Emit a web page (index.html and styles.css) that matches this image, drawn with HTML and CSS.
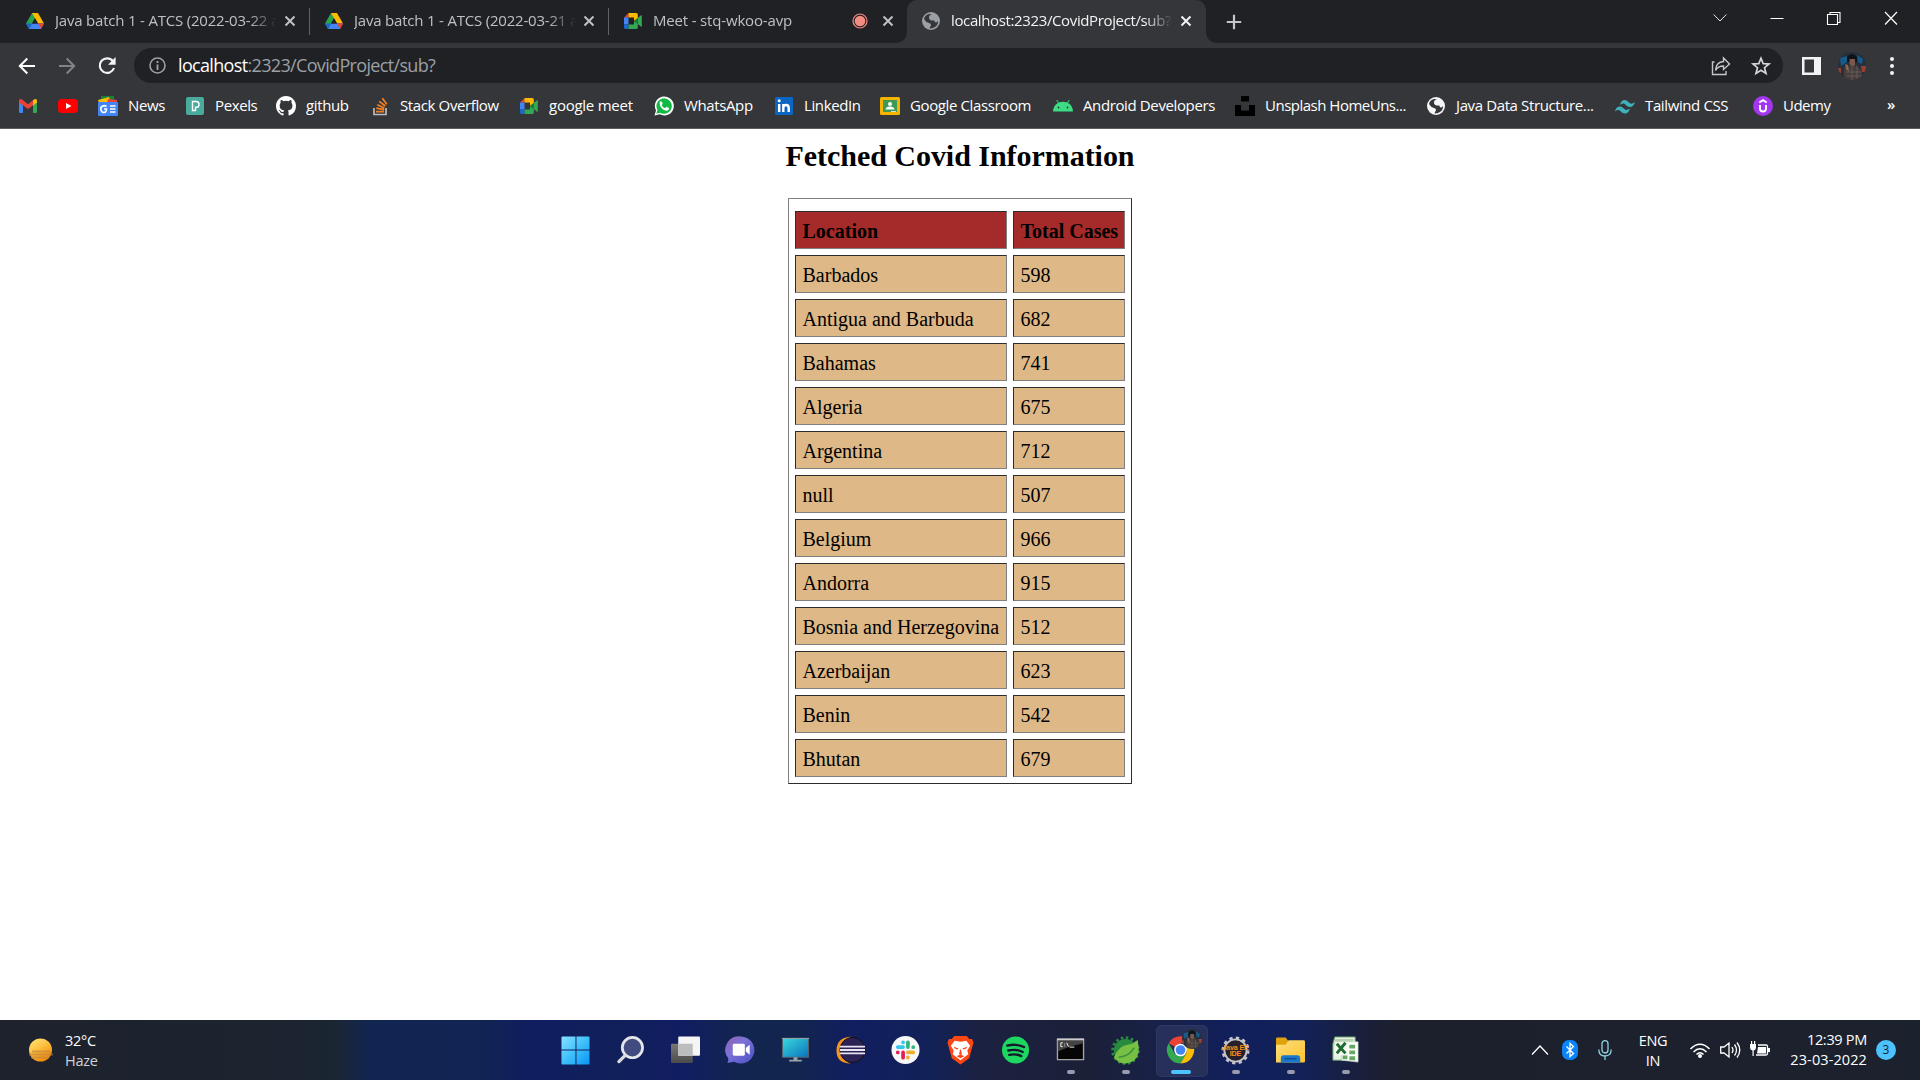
FILE: index.html
```html
<!DOCTYPE html>
<html lang="en">
<head>
<meta charset="utf-8">
<title>Covid Information</title>
<link rel="stylesheet" href="styles.css">
</head>
<body>
<svg class="defs" width="0" height="0">
  <defs>
    <linearGradient id="sun" x1="0" y1="0" x2=".6" y2="1"><stop offset="0" stop-color="#ffe97a"/><stop offset=".5" stop-color="#fcc040"/><stop offset="1" stop-color="#f58b0a"/></linearGradient>
    <linearGradient id="win" x1="0" y1="0" x2="1" y2="1"><stop offset="0" stop-color="#8ae2ff"/><stop offset=".5" stop-color="#3fc0fb"/><stop offset="1" stop-color="#0a94f5"/></linearGradient>
    <linearGradient id="chat" x1="0" y1="0" x2="1" y2="1"><stop offset="0" stop-color="#9a62b0"/><stop offset=".4" stop-color="#7a72d8"/><stop offset="1" stop-color="#4b4fc4"/></linearGradient>
    <linearGradient id="mon" x1="0" y1="0" x2="1" y2="1"><stop offset="0" stop-color="#38dbdc"/><stop offset="1" stop-color="#0b70bd"/></linearGradient>
    <linearGradient id="fold" x1="0" y1="0" x2="1" y2="1"><stop offset="0" stop-color="#ffdf7a"/><stop offset="1" stop-color="#fcc230"/></linearGradient>
    <linearGradient id="tv" x1="0" y1="0" x2="0" y2="1"><stop offset="0" stop-color="#777"/><stop offset="1" stop-color="#4b4b4b"/></linearGradient>
  </defs>
  <symbol id="drive" viewBox="0 0 18 18"><path fill="#2ba24c" d="M6 1h6L3 17 0 11.5z"/><path fill="#ffba00" d="M6 1h6l6 10.5h-6z"/><path fill="#4285f4" d="M3 17l3-5.5h12L15 17z"/><path fill="#1967d2" d="M0 11.5h6L3 17z"/><path fill="#ea4335" d="M12 11.5h6L15 17z"/><path fill="#202124" d="M9 6.3l3 5.2H6z"/></symbol>
  <symbol id="meet" viewBox="0 0 18 18"><path fill="#ea4335" d="M0 5.500L4.500 1v4.500z"/><path fill="#ffba00" d="M4.500 1h7.700q1.600 0 1.600 1.600V6L10 9V5.500H4.500z"/><path fill="#4285f4" d="M0 5.500h4.500v7H0z"/><path fill="#1967d2" d="M0 12.500h4.500V17H1.600Q0 17 0 15.400z"/><path fill="#34a853" d="M4.500 12.500H10V9l3.800 3v3.400q0 1.600-1.600 1.600H4.500z"/><path fill="#188038" d="M10 9l3.800-3v6z"/><path fill="#34a853" d="M13.800 6L17 3.300q.8-.4.8.5v10.400q0 .9-.8.5L13.800 12z"/></symbol>
  <symbol id="x" viewBox="0 0 12 12"><path d="M1.500 1.500l9 9m0-9l-9 9" fill="none" stroke="currentColor" stroke-width="2"/></symbol>
  <symbol id="globe" viewBox="0 0 18 18"><circle cx="9" cy="9" r="9" fill="currentColor"/><path class="land" d="M10.200 2Q7 3 7 5.500t3 3h2.300q.7 3 2.700 1.500l1-1q.5 5-5 7-2.200.7-3.500.3l1.500-3q.3-2-2-2.300Q4 10.500 2 7q1-4.300 5.500-5z"/></symbol>
  <symbol id="gear" viewBox="0 0 30 30"><circle cx="15" cy="15" r="12" fill="currentColor"/><circle cx="15" cy="15" r="13.300" fill="none" stroke="currentColor" stroke-width="3" stroke-dasharray="2.610 2.610"/></symbol>
  <symbol id="cog" viewBox="0 0 30 30"><circle cx="15" cy="15" r="11.500" fill="none" stroke="currentColor" stroke-width="2"/><circle cx="15" cy="15" r="13" fill="none" stroke="currentColor" stroke-width="3" stroke-dasharray="3.403 3.403"/></symbol>
</svg>

<header class="browser">
  <div class="tabstrip">
    <div class="tab"><svg class="fav"><use href="#drive"/></svg><span class="tab-title t1">Java batch 1 - ATCS (2022-03-22 at</span><svg class="close"><use href="#x"/></svg></div>
    <div class="tab"><svg class="fav"><use href="#drive"/></svg><span class="tab-title t1">Java batch 1 - ATCS (2022-03-21 at</span><svg class="close"><use href="#x"/></svg></div>
    <div class="tab last"><svg class="fav"><use href="#meet"/></svg><span class="tab-title t3">Meet - stq-wkoo-avp</span><svg class="rec" viewBox="0 0 16 16"><circle cx="8" cy="8" r="5.300" fill="#f28b82"/><circle cx="8" cy="8" r="7" fill="none" stroke="#f28b82" stroke-width="1.200"/></svg><svg class="close"><use href="#x"/></svg></div>
    <div class="tab active"><svg class="fav"><use href="#globe"/></svg><span class="tab-title t4">localhost:2323/CovidProject/sub?</span><svg class="close"><use href="#x"/></svg></div>
    <svg class="newtab" viewBox="0 0 16 16"><path d="M8 .8v14.400M.8 8h14.400" stroke="#c4c7ca" stroke-width="2.200"/></svg>
    <div class="controls">
      <svg viewBox="0 0 14 14"><path d="M.7 3.500L7 10l6.300-6.500" fill="none" stroke="#e6e6e6"/></svg>
      <svg viewBox="0 0 14 14"><path d="M.5 7.500h13" stroke="#fff"/></svg>
      <svg viewBox="0 0 14 14"><path d="M.5 3.500h10v10H.5zM3 3.500v-2h10v10h-2.500" fill="none" stroke="#fff" stroke-width="1.100"/></svg>
      <svg viewBox="0 0 14 14"><path d="M1 1l12 12.500M13 1L1 13.500" stroke="#fff" stroke-width="1.200"/></svg>
    </div>
  </div>

  <div class="toolbar">
    <svg class="nav" viewBox="0 0 18 18"><path d="M17 9H2.500M9.300 1.500L1.800 9l7.500 7.500" fill="none" stroke="#fff" stroke-width="2"/></svg>
    <svg class="nav" viewBox="0 0 18 18"><path d="M1 9h14.500M8.700 1.500L16.200 9l-7.500 7.500" fill="none" stroke="#808387" stroke-width="2"/></svg>
    <svg class="nav" viewBox="0 0 18 18"><path d="M14.800 4A7.300 7.300 0 1 0 16 11" fill="none" stroke="#f1f3f4" stroke-width="2.200"/><path d="M17.600 0v7.800H10z" fill="#f1f3f4"/></svg>
    <div class="omnibox">
      <svg class="info" viewBox="0 0 17 17"><circle cx="8.500" cy="8.500" r="7.500" fill="none" stroke="#9aa0a6" stroke-width="1.600"/><path d="M8.500 7.500V13M8.500 4v2" stroke="#9aa0a6" stroke-width="1.900"/></svg>
      <span class="url"><b>localhost</b>:2323/CovidProject/sub?</span>
      <svg class="act" viewBox="0 0 20 20"><path d="M3.500 6H1.500v12.500H15V15" fill="none" stroke="#c4c7ca" stroke-width="1.400"/><path d="M4.500 14.500Q5 6 12.500 5.500V2l6 6-6 5.500V10Q7 10 4.500 14.500z" fill="none" stroke="#c4c7ca" stroke-width="1.400"/></svg>
      <svg class="act" viewBox="0 0 20 20"><path d="M10 2.200l2.200 5.400 5.800.4-4.500 3.700 1.500 5.700-5-3.200-5 3.200 1.500-5.700L2 8l5.800-.4z" fill="none" stroke="#d5d7da" stroke-width="1.700"/></svg>
    </div>
    <svg class="side" viewBox="0 0 19 18"><path d="M0 0h19v18H0zM2.500 2.500v13h9.500v-13z" fill="#f1f3f4" fill-rule="evenodd"/></svg>
    <svg class="avatar" viewBox="0 0 28 28"><clipPath id="ava"><circle cx="14" cy="14" r="14"/></clipPath><g id="photo" clip-path="url(#ava)"><path fill="#25303c" d="M0 0h28v28H0z"/><path fill="#175a8c" d="M2 6l7-2 0 6-6 4zM19 3l6 4-1 5-4-2z"/><path fill="#9a4030" d="M23 14h5v6h-4zM0 16h3v5H0z"/><path fill="#101217" d="M9 5q5-6 10 0v5H9z"/><path fill="#7a584b" d="M11.500 7h5.500v6l-2.500 2-3-3z"/><path fill="#453e3d" d="M6 16l6-3 3 2 4-2 5 7v8H6z"/><path fill="#8c6553" d="M7 12l3 1 1 7-3-3z"/><path stroke="#6d615d" stroke-width=".8" d="M8 20h15M9 24h14M14 15v13M19 15v13"/></g></svg>
    <svg class="dots" viewBox="0 0 4 18"><g fill="#f1f3f4"><circle cx="2" cy="2" r="2"/><circle cx="2" cy="9" r="2"/><circle cx="2" cy="16" r="2"/></g></svg>
  </div>

  <nav class="bookmarks">
    <a><svg viewBox="0 0 20 20"><path fill="#4285f4" d="M1 4h4v13H2.500Q1 17 1 15.500z"/><path fill="#34a853" d="M15 8l4-3v10.500q0 1.500-1.500 1.500H15z"/><path fill="#ea4335" d="M1 5q0-3 3-1.500l6 4.700 6-4.700v5L10 13 1 6.500z"/><path fill="#fbbc04" d="M15 4.200Q19 1.500 19 5v1.500l-4 3z"/></svg></a>
    <a><svg viewBox="0 0 20 20"><rect y="3" width="20" height="14" rx="4" fill="#f00"/><path fill="#fff" d="M8 7l5.500 3L8 13z"/></svg></a>
    <a><svg viewBox="0 0 20 20"><path fill="#188038" d="M3 0h13v6H3z"/><path fill="#fbbc04" d="M0 4l11-3 2 6H1z"/><path fill="#ea4335" d="M10 3l9 1v4H9z"/><rect y="6" width="20" height="14" rx="1" fill="#4285f4"/><path d="M8.500 10.500Q6.500 9 4.300 10.200T3 14q.7 2.500 3 2.500T8.500 13H6M17.500 10H12m5.500 3H12m5.500 3H12" fill="none" stroke="#fff" stroke-width="1.600"/></svg><span>News</span></a>
    <a><svg viewBox="0 0 20 20"><rect x="1" y="1" width="18" height="18" rx="2" fill="#4aaa9b"/><path d="M7.500 14.500v-9h3.700q2.800 0 2.800 2.900t-2.800 2.900H10.500V14.500z" fill="none" stroke="#fff" stroke-width="1.400"/></svg><span>Pexels</span></a>
    <a><svg viewBox="0 0 16 16"><path fill="#fff" d="M8 0C3.580 0 0 3.580 0 8c0 3.540 2.290 6.530 5.470 7.590.4.070.55-.17.55-.38v-1.490c-2.010.37-2.530-.49-2.690-.94-.09-.23-.48-.94-.82-1.130-.28-.15-.68-.52-.01-.53.63-.01 1.080.58 1.230.82.72 1.210 1.870.87 2.330.66.07-.52.280-.87.510-1.070-1.780-.2-3.640-.89-3.640-3.950 0-.87.310-1.590.82-2.150-.08-.2-.36-1.020.08-2.120 0 0 .67-.21 2.200.82a7.600 7.600 0 0 1 4 0c1.530-1.040 2.200-.82 2.200-.82.440 1.100.160 1.920.08 2.120.51.560.82 1.270.82 2.150 0 3.070-1.870 3.750-3.650 3.950.29.25.54.73.54 1.480v2.200c0 .21.15.46.55.38A8 8 0 0 0 16 8c0-4.420-3.580-8-8-8z"/></svg><span>github</span></a>
    <a><svg viewBox="0 0 20 20"><path d="M4 12v6.500h12V12" fill="none" stroke="#bcbbbb" stroke-width="1.700"/><path d="M6 15.600h8M6.300 12.200l7.900 1.500M7.300 8.700l7 3.300M9.300 5.300l6 4.700M12.300 2.300l4.500 6" stroke="#f48024" stroke-width="1.700"/></svg><span>Stack Overflow</span></a>
    <a class="wide"><svg class="pad"><use href="#meet"/></svg><span>google meet</span></a>
    <a><svg viewBox="0 0 20 20"><path d="M.5 19.500L2 14.500A9.500 9.500 0 1 1 5.800 18.300z" fill="#fff"/><path d="M2.300 17.800L3.500 14A7.700 7.700 0 1 1 6.200 16.700z" fill="#12b944"/><path d="M5.500 6.500q1.500-2.500 2.500-.4l.7 1.700-1 1.400q1.300 2.300 3.500 3l1.300-1.400 2.500 1.300q.3 2.500-2.800 2.600-6.200-1.200-6.700-8.200z" fill="#fff"/></svg><span>WhatsApp</span></a>
    <a><svg viewBox="0 0 20 20"><rect x="1" y="1" width="18" height="18" rx="1" fill="#0a66c2"/><path d="M5.200 8v8M9.300 16V8m0 4q0-3 2.700-3t2.700 3v4" fill="none" stroke="#fff" stroke-width="2.400"/><circle cx="5.200" cy="4.800" r="1.500" fill="#fff"/></svg><span>LinkedIn</span></a>
    <a><svg viewBox="0 0 20 20"><rect y="1" width="20" height="18" rx="1.500" fill="#f4b400"/><path fill="#3f9b54" d="M3 4h14v12H3z"/><circle cx="10" cy="8" r="2" fill="#fff"/><path fill="#fff" d="M5.500 13.500q.5-3 4.500-3t4.500 3z"/><path fill="#ddd" d="M11 15h5v1h-5z"/></svg><span>Google Classroom</span></a>
    <a><svg viewBox="0 0 20 20"><path fill="#3ddc84" d="M0 15.500Q.5 9 5 7L3.300 4.200l.7-.4L5.800 6.600Q10 5 14.200 6.600L16 3.800l.7.4L15 7q4.500 2 5 8.500z"/><circle cx="5.500" cy="11.500" r=".9" fill="#35363a"/><circle cx="14.500" cy="11.500" r=".9" fill="#35363a"/></svg><span>Android Developers</span></a>
    <a class="tight"><svg viewBox="0 0 20 20"><path d="M6 0h8v5.500H6zM0 9h6v5.500h8V9h6v11H0z"/></svg><span>Unsplash HomeUns...</span></a>
    <a class="white"><svg class="pad"><use href="#globe"/></svg><span>Java Data Structure...</span></a>
    <a><svg viewBox="0 0 20 20"><path fill="#3fb1bd" d="M5 9q1-5 5-5 2 0 4 2.500t6-.5q-1.500 5-5 5-2.500 0-4.500-2.300T5 9zM0 15.500q1-5 5-5 2 0 4 2.300t6-.3q-1.500 5-5 5-2.500 0-4.500-2.300T0 15.500z"/></svg><span>Tailwind CSS</span></a>
    <a class="tight"><svg viewBox="0 0 20 20"><circle cx="10" cy="10" r="10" fill="#a435f0"/><path d="M6.300 6.500L10 4.200l3.700 2.300M7 9v3.500q0 3 3 3t3-3V9" fill="none" stroke="#fff" stroke-width="1.900"/></svg><span>Udemy</span></a>
    <a class="more">»</a>
  </nav>
</header>

<main class="page">
  <h2>Fetched Covid Information</h2>
  <table>
    <tbody>
      <tr class="blank"></tr>
      <tr><th>Location</th><th>Total Cases</th></tr>
      <tr><td>Barbados</td><td>598</td></tr>
      <tr><td>Antigua and Barbuda</td><td>682</td></tr>
      <tr><td>Bahamas</td><td>741</td></tr>
      <tr><td>Algeria</td><td>675</td></tr>
      <tr><td>Argentina</td><td>712</td></tr>
      <tr><td>null</td><td>507</td></tr>
      <tr><td>Belgium</td><td>966</td></tr>
      <tr><td>Andorra</td><td>915</td></tr>
      <tr><td>Bosnia and Herzegovina</td><td>512</td></tr>
      <tr><td>Azerbaijan</td><td>623</td></tr>
      <tr><td>Benin</td><td>542</td></tr>
      <tr><td>Bhutan</td><td>679</td></tr>
    </tbody>
  </table>
</main>

<footer class="taskbar">
  <div class="weather">
    <svg viewBox="0 0 26 26"><circle cx="12.500" cy="13" r="11.500" fill="url(#sun)"/><path d="M4 14.500h18M1 17.500h24M3 20.500h18" stroke="#b9823c" stroke-width="1.800" opacity=".6"/></svg>
    <div><p>32°C</p><p class="dim">Haze</p></div>
  </div>
  <div class="apps">
    <div class="app"><svg viewBox="0 0 30 30"><path fill="url(#win)" d="M1.500.500H15V14H.500V1.500q0-1 1-1zM16 .500h12.500q1 0 1 1V14H16zM.500 15H15v14.500H1.500q-1 0-1-1zM16 15h13.500v13.500q0 1-1 1H16z"/></svg></div>
    <div class="app"><svg viewBox="0 0 30 30"><circle cx="17" cy="12" r="10.500" fill="#414b80" stroke="#e4e6e8" stroke-width="2.800"/><path d="M9 20.500l-6 6" stroke="#d9dbdd" stroke-width="3.400" stroke-linecap="round"/></svg></div>
    <div class="app"><svg viewBox="0 0 30 30"><rect y="8" width="22.500" height="20" rx="1" fill="url(#tv)"/><rect x="7.500" y=".500" width="22.500" height="20" rx="1" fill="#f5f5f5"/><path fill="#bdbdbd" d="M7.500 8h15v12.500h-15z"/></svg></div>
    <div class="app"><svg viewBox="0 0 30 30"><path d="M15.500.5a14 14 0 1 1-7 26.200L1.500 28q1.200-2 .8-5A14 14 0 0 1 15.500.5z" fill="url(#chat)"/><rect x="7" y="8" width="12.500" height="12.500" rx="1.500" fill="#fff"/><path fill="#fff" d="M20.500 12.500L24.500 9v10.500l-4-3.500z"/></svg></div>
    <div class="app"><svg viewBox="0 0 30 30"><path d="M1.500 2.500h27v19.500h-27z" fill="url(#mon)" stroke="#59636d"/><path d="M1 2.500h28" stroke="#9aaab2"/><path fill="#9aa3a8" d="M13 22h4v2.500h4.500V26.500h-13v-2H13z"/></svg></div>
    <div class="app"><svg viewBox="0 0 30 30"><path d="M16 .8Q1 1 .5 14.500T15 28.500Q5 24 5 14.500T16 .8z" fill="#f7941e"/><circle cx="17" cy="14.500" r="13" fill="#2c2255" stroke="#111"/><path d="M4 11h26M4 14.500h26M4 18h26" stroke="#e8e4f2" stroke-width="2"/></svg></div>
    <div class="app"><svg viewBox="0 0 30 30"><circle cx="15" cy="14.500" r="14.500" fill="#f7f7f7"/><g stroke-width="3.800" stroke-linecap="round"><path stroke="#36c5f0" d="M12.500 6.500v.1M7 11.500h5.500"/><path stroke="#2eb67d" d="M17.500 6.500v5M23 11.500v.1"/><path stroke="#ecb22e" d="M17.500 17h5.500M17.500 22.200v.1"/><path stroke="#e01e5a" d="M12.500 17v5.500M7 17v.1"/></g></svg></div>
    <div class="app"><svg viewBox="0 0 30 30"><path fill="#fb4716" d="M8.500 0h13l2.500 3h3l1.500 4-1 3-3.500 13-9 6.500-9-6.500L2.500 10l-1-3L3 3h3z"/><path fill="#fff" d="M9 5l6 1 6-1 4 5-3 5 1 4-8 6-8-6 1-4-3-5z"/><path fill="#fb4716" d="M8 11l5 2-1 1-3-1zM22 11l-5 2 1 1 3-1zM14.500 14h1l1 5h-3zM11 21l4-2 4 2-4 2z"/></svg></div>
    <div class="app"><svg viewBox="0 0 30 30"><circle cx="15" cy="14.500" r="14" fill="#1ed760"/><path d="M6.500 10q9-2.500 17.500 1.500M7.500 15q8-2 15 1.500M8.500 19.500q7-1.500 12.500 1.300" fill="none" stroke="#121b2c" stroke-width="2.400" stroke-linecap="round"/></svg></div>
    <div class="app run"><svg viewBox="0 0 30 30"><path d="M1.500 3.500h27v21h-27z" fill="#050505" stroke="#a5a5a5" stroke-width="1.400"/><path d="M2 4.500h26v3Q15 10 2 16z" fill="#444"/><path d="M1 3.500h28" stroke="#ccc" stroke-width="2"/><path d="M7 7H5v4h2M9 8v.8M9 10v.8M11 7l2 4M14 11.500h5" fill="none" stroke="#eee" stroke-width="1"/></svg></div>
    <div class="app run spring"><svg viewBox="0 0 30 30"><use href="#gear" width="30" height="30"/><path fill="#77c044" d="M3 22Q8 10 17 9q6 0 10.500-5 1.500 8 1 13-2 10-13 11.500Q8 29 3 22z"/><path d="M8 22q11-1 16-10" fill="none" stroke="#398f3d" stroke-width="1.500"/></svg></div>
    <div class="app run on"><svg viewBox="0 0 30 30"><path fill="#ea4335" d="M15 14.500L2.800 7.500A14 14 0 0 1 27.200 7.500H15z"/><path fill="#34a853" d="M2.800 7.500A14 14 0 0 0 15 28.500l6-10.500H9z"/><path fill="#fbbc04" d="M27.200 7.500A14 14 0 0 1 15 28.500l6-10.500V7.500z"/><circle cx="15" cy="14.500" r="6.500" fill="#fff"/><circle cx="15" cy="14.500" r="5" fill="#4285f4"/></svg><svg class="face" viewBox="0 0 28 28"><use href="#photo"/></svg></div>
    <div class="app run jee"><svg viewBox="0 0 30 30"><circle cx="15" cy="15" r="11" fill="#26202c"/><use href="#cog" width="30" height="30"/><g class="jee-text"><text x="15" y="14">Java EE</text><text x="15" y="20.500">IDE</text></g></svg></div>
    <div class="app run"><svg viewBox="0 0 30 30"><path fill="#e0a30c" d="M1.500 1.500H10l3 4h5v6H0V3q0-1.500 1.500-1.500z"/><path fill="url(#fold)" d="M0 9h10l3-4.500h15.500q1.500 0 1.500 1.500v20q0 1.500-1.500 1.500H0z"/><path fill="#1878cb" d="M5 27.500V23q0-3 3-3h14q3 0 3 3v4.500z"/><path d="M9 23.500h12" stroke="#0d4f94" stroke-width="1.500"/></svg></div>
    <div class="app run"><svg viewBox="0 0 30 30"><path fill="#e7f0e4" stroke="#68a46d" d="M4 1h21v24H2V8z"/><path fill="#b6d3ae" d="M4 3h19v6H3z"/><path fill="#fff" stroke="#bcd0ba" stroke-width=".7" d="M11 6h17v21L11 25z"/><path fill="#66a862" d="M19 9h6v4h-6zM19 15h6v4h-6zM19 21h6v4h-6zM12 20h5v4h-5z"/><path fill="#f3f8f0" d="M4 6h14v14H4z"/><path d="M6 8l9 10M15 7L6 18" stroke="#1d6b2f" stroke-width="3"/></svg></div>
  </div>
  <div class="tray">
    <svg class="chev" viewBox="0 0 18 20"><path d="M1 14.500L9 6l8 8.500" fill="none" stroke="#fff" stroke-width="1.300"/></svg>
    <svg class="bt" viewBox="0 0 16 20"><rect width="16" height="20" rx="7" fill="#0a84f8"/><path d="M4.500 6.500l7 7L8 16.500v-13l3.500 3-7 7" fill="none" stroke="#fff" stroke-width="1.300"/></svg>
    <svg class="mic" viewBox="0 0 14 20"><rect x="4" y=".700" width="6" height="12.300" rx="3" fill="none" stroke="#8fd3e3" stroke-width="1.300"/><path d="M.8 9.500Q.8 16 7 16t6.200-6.500M7 16v4" fill="none" stroke="#8fd3e3" stroke-width="1.300"/></svg>
    <div class="lang"><p>ENG</p><p>IN</p></div>
    <svg class="wifi" viewBox="0 0 20 20"><path d="M.5 9q9.500-9.500 19 0M3.500 12q6.500-6.500 13 0M6.500 14.500q3.500-3.500 7 0" fill="none" stroke="#fff" stroke-width="1.500"/><circle cx="10" cy="16" r="2" fill="#fff"/></svg>
    <svg class="vol" viewBox="0 0 20 20"><path d="M.7 7v6H4l5 4V3L4 7zM12 7q2 3 0 6M14.500 4.500q4 5.500 0 11M17 2.500q5.500 7.500 0 15" fill="none" stroke="#fff" stroke-width="1.300"/></svg>
    <svg class="bat" viewBox="0 0 20 20"><path d="M8 5h8q1.500 0 1.500 1.500v7q0 1.500-1.500 1.500H6" fill="none" stroke="#fff" stroke-width="1.300"/><path fill="#fff" d="M8 7h8v6.500H7zM18 8h2v4h-2zM0 4h6v4q-.5 2-2.300 2.500V16H2.500v-5.500Q.5 10 0 8zM1 1h1.200v3H1zM4 1h1.200v3H4z"/></svg>
    <div class="clock"><p>12:39 PM</p><p class="date">23-03-2022</p></div>
    <span class="badge">3</span>
  </div>
</footer>
</body>
</html>
```
FILE: styles.css
```css
* { box-sizing: border-box; }
body { margin: 0; width: 1920px; height: 1080px; overflow: hidden; display: flex; flex-direction: column; background: #fff; font-family: "Open Sans", "Noto Sans", sans-serif; }
p { margin: 0; }
svg { display: block; flex: none; overflow: visible; }
.defs { position: absolute; }

.browser { height: 129px; flex: none; background: #35363a; border-bottom: 1px solid #5c5d61; }

.tabstrip { height: 43px; background: #202124; display: flex; align-items: center; padding-left: 11px; color: #bdc1c6; }
.tab { width: 299px; height: 43px; padding-left: 15px; display: flex; align-items: center; border-right: 1px solid transparent; border-image: linear-gradient(transparent 9px, #5f6368 9px, #5f6368 34px, transparent 34px) 1; padding-bottom: 1px; }
.tab.last { width: 298px; border: 0; }
.tab.active { border: 0; background: #35363a; border-radius: 10px 10px 0 0; color: #f1f3f4; position: relative; }
.tab.active::before, .tab.active::after { content: ""; position: absolute; bottom: 0; width: 10px; height: 10px; }
.tab.active::before { left: -10px; background: radial-gradient(circle at 0 0, transparent 9.5px, #35363a 10px); }
.tab.active::after { right: -10px; background: radial-gradient(circle at 100% 0, transparent 9.5px, #35363a 10px); }
.fav { width: 18px; height: 18px; margin-right: 11px; color: #9aa0a6; }
.land { fill: #35363a; }
.tab-title { width: 222px; margin-right: 7px; padding-bottom: 2px; overflow: hidden; white-space: nowrap; font-size: 15px; letter-spacing: -0.37px; -webkit-mask-image: linear-gradient(90deg, #000 194px, transparent 222px); mask-image: linear-gradient(90deg, #000 194px, transparent 222px); }
.t1 { letter-spacing: -0.2px; }
.t3 { width: 192px; letter-spacing: -0.17px; }
.rec { width: 16px; height: 16px; margin-right: 14px; }
.close { width: 12px; height: 12px; }
.newtab { width: 16px; height: 16px; margin-left: 20px; }
.controls { margin-left: auto; padding-right: 22px; display: flex; gap: 43px; padding-bottom: 7px; }
.controls svg { width: 14px; height: 14px; }

.toolbar { height: 44px; display: flex; align-items: center; padding: 1px 26px 0 18px; }
.nav { width: 18px; height: 18px; margin-right: 22px; }
.nav + .nav + .nav { margin-right: 18px; }
.omnibox { width: 1650px; height: 35px; border-radius: 18px; background: #202124; display: flex; align-items: center; padding: 0 12px 0 15px; }
.info { width: 17px; height: 17px; margin-right: 12px; }
.url { font-size: 18px; letter-spacing: -0.66px; color: #9aa0a6; margin-right: auto; padding-bottom: 1px; white-space: nowrap; }
.url b { font-weight: 400; color: #fff; }
.act { width: 20px; height: 20px; margin-left: 20px; }
.side { width: 19px; height: 18px; margin-left: 19px; }
.avatar { width: 28px; height: 28px; margin-left: 17px; }
.dots { width: 4px; height: 18px; margin-left: 24px; }

.bookmarks { height: 41px; padding: 0 0 4px 18px; display: grid; align-items: center; grid-template-columns: 40px 40px 87px 91px 94px 149px 135px 120px 106px 173px 182px 191px 189px 138px 129px 30px; color: #fff; font-size: 15px; letter-spacing: -0.38px; white-space: nowrap; }
.bookmarks a { display: flex; align-items: center; gap: 10px; }
.bookmarks span { padding-bottom: 2px; }
.bookmarks svg { width: 20px; height: 20px; }
.bookmarks svg.pad { padding: 1px; }
.wide { letter-spacing: -0.25px; }
.tight { letter-spacing: -0.5px; }
.white svg { color: #f4f6f8; }
.bookmarks .more { padding: 0 0 3px 5px; font-weight: 600; }

.page { flex: 1; font-family: "Liberation Serif", serif; color: #000; }
h2 { margin: 10px 0 25px; font-size: 30px; line-height: 34px; text-align: center; letter-spacing: -0.04px; }
table { margin: 0 auto; width: 344px; border: 1px solid; border-color: #808080 #2c2c2c #2c2c2c #808080; border-collapse: separate; border-spacing: 6px; font-size: 20px; }
th, td { height: 38px; padding: 1px 0 0 6.5px; line-height: 24px; text-align: left; border: 1px solid; border-color: #2c2c2c #808080 #808080 #2c2c2c; background: #deb887; white-space: nowrap; }
th { background: #a52a2a; }
th:first-child { width: 212px; }
th:last-child { width: 112px; }

.taskbar { height: 60px; flex: none; display: flex; align-items: center; color: #fff; background: linear-gradient(90deg, #1e222c 0, #1b2430 300px, #1b2633 335px, #112552 372px, #112453 480px, #101d60 535px, #11205a 620px, #111d62 680px, #12254f 740px, #12254f 800px, #111e60 850px, #122158 930px, #1b2140 980px, #1b2038 1090px, #17214b 1170px, #111f5b 1230px, #122158 1300px, #1a1f3a 1365px, #1c202d 1400px, #1c222d 1920px); font-size: 14.5px; line-height: 20px; letter-spacing: -0.3px; }
.weather { width: 548px; flex: none; padding-left: 28px; display: flex; align-items: center; gap: 11px; }
.weather svg { width: 26px; height: 26px; }
.weather p, .lang p { position: relative; top: 1px; }
.dim { color: #cfd2d6; }
.apps { display: flex; width: 825px; flex: none; }
.app { width: 55px; height: 60px; display: flex; align-items: center; justify-content: center; position: relative; }
.app svg { width: 29px; height: 29px; }
.run::after { content: ""; position: absolute; left: 24px; top: 50px; width: 8px; height: 4px; border-radius: 2px; background: #989bad; }
.on::before { content: ""; position: absolute; left: 3px; top: 5px; width: 50px; height: 50px; border-radius: 5px; background: #26305a; border: 1px solid #2f3861; }
.app.on::after { left: 18px; width: 20px; background: #4cc2ff; }
.on svg { position: relative; }
.on .face { position: absolute; left: 29px; top: 9px; width: 20px; height: 20px; }
.spring { color: #288a3e; }
.jee { color: #c4c4c8; }
.jee-text { font: 700 7.5px "Liberation Sans", sans-serif; letter-spacing: -0.2px; fill: #ff8c1a; text-anchor: middle; }
.tray { flex: 1; display: flex; align-items: center; padding-left: 158px; }
.chev { width: 18px; height: 20px; margin-right: 13px; }
.bt { width: 16px; height: 20px; margin-right: 20px; }
.mic { width: 14px; height: 20px; margin-right: 22px; }
.lang { width: 38px; text-align: center; margin-right: 18px; }
.wifi, .vol, .bat { width: 20px; height: 20px; margin-right: 10px; }
.clock { width: 87px; text-align: right; margin-right: 9px; white-space: nowrap; }
.date { letter-spacing: 0.1px; }
.badge { width: 20px; height: 20px; border-radius: 50%; background: #4cc2ff; color: #16202b; font-size: 12px; letter-spacing: 0; text-align: center; line-height: 20px; }
```
